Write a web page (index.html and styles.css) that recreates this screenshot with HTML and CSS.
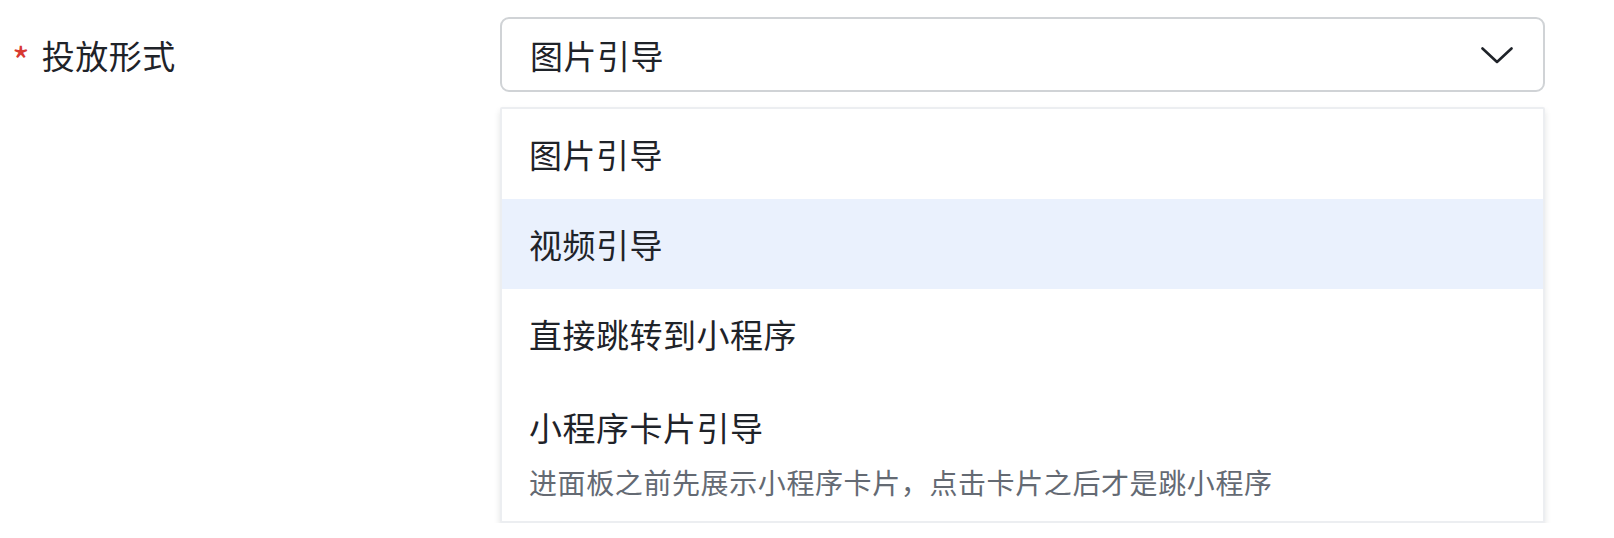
FILE: index.html
```html
<!DOCTYPE html>
<html lang="zh-CN">
<head>
<meta charset="utf-8">
<title>投放形式</title>
<link rel="stylesheet" href="styles.css">
</head>
<body>
<div class="form-row">
  <div class="label"><span class="required">*</span><span class="label-text">投放形式</span></div>
  <div class="field">
    <div class="select">
      <span class="select-value">图片引导</span>
      <svg class="chevron" width="32" height="17" viewBox="0 0 32 17"><path d="M1.5 1.5 L16 15 L30.5 1.5" fill="none" stroke="#1f2329" stroke-width="2.6" stroke-linecap="round" stroke-linejoin="round"/></svg>
    </div>
    <div class="dropdown">
      <div class="option">图片引导</div>
      <div class="option active">视频引导</div>
      <div class="option">直接跳转到小程序</div>
      <div class="option option-multi">
        <div class="option-title">小程序卡片引导</div>
        <div class="option-desc">进面板之前先展示小程序卡片，点击卡片之后才是跳小程序</div>
      </div>
    </div>
  </div>
</div>
</body>
</html>
```

FILE: styles.css
```css
html, body {
  margin: 0;
  padding: 0;
  background: #ffffff;
}
body {
  font-family: "Noto Sans CJK SC", "Noto Sans", sans-serif;
  color: #1f2329;
}
.form-row {
  display: flex;
  align-items: flex-start;
  padding: 17px 0 0 0;
}
.label {
  width: 500px;
  display: flex;
  align-items: center;
  height: 75px;
  font-size: 33px;
  box-sizing: border-box;
  padding-left: 12px;
}
.required {
  color: #d83931;
  font-size: 38px;
  margin-right: 12px;
  position: relative;
  top: 5px;
}
.label-text {
  letter-spacing: 0.5px;
}
.field {
  width: 1045px;
  display: flex;
  flex-direction: column;
  gap: 15px;
}
.select {
  height: 75px;
  box-sizing: border-box;
  border: 2px solid #d0d3d6;
  border-radius: 9px;
  display: flex;
  align-items: center;
  justify-content: space-between;
  padding: 0 30px 0 28px;
  font-size: 33px;
}
.select-value {
  letter-spacing: 0.5px;
}
.chevron {
  display: block;
  margin-top: 2px;
}
.dropdown {
  border: 2px solid #eceef1;
  border-radius: 2px;
  background: #ffffff;
  box-shadow: 0 4px 6px rgba(31, 35, 41, 0.13);
  display: flex;
  flex-direction: column;
}
.option {
  height: 90px;
  line-height: 90px;
  padding: 0 27px;
  font-size: 33px;
  letter-spacing: 0.5px;
}
.option.active {
  background: #eaf1fd;
}
.option-multi {
  height: 142px;
  line-height: normal;
  display: flex;
  flex-direction: column;
  padding-top: 25px;
  box-sizing: border-box;
}
.option-title {
  line-height: 46px;
}
.option-desc {
  margin-top: 12px;
  font-size: 28px;
  line-height: 40px;
  color: #646a73;
  letter-spacing: 0.6px;
}
```
